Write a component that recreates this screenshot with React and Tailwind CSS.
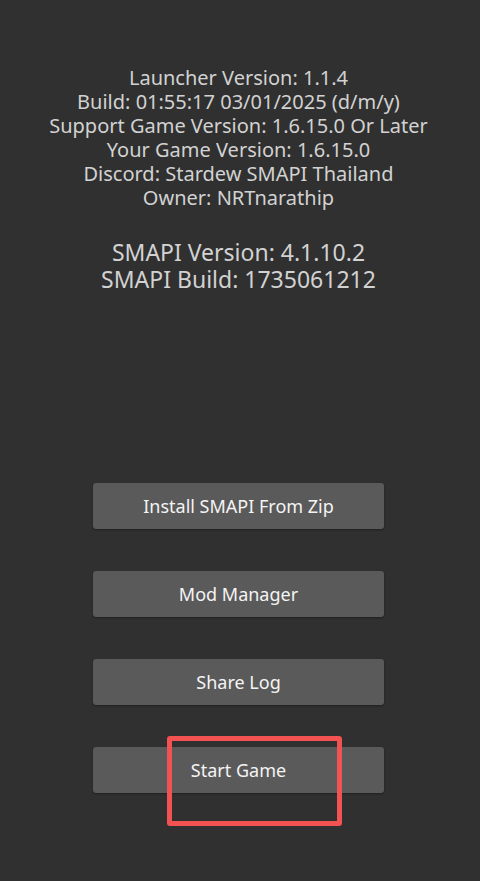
import React from 'react';

const infoLines = [
  'Launcher Version: 1.1.4',
  'Build: 01:55:17 03/01/2025 (d/m/y)',
  'Support Game Version: 1.6.15.0 Or Later',
  'Your Game Version: 1.6.15.0',
  'Discord: Stardew SMAPI Thailand',
  'Owner: NRTnarathip',
];

const smapiLines = ['SMAPI Version: 4.1.10.2', 'SMAPI Build: 1735061212'];

const buttons = ['Install SMAPI From Zip', 'Mod Manager', 'Share Log', 'Start Game'];

export default function App() {
  return (
    <div
      className="relative w-full h-[881px] bg-[#303030] flex flex-col items-center pr-[3px]"
      style={{ fontFamily: '"Noto Sans", Roboto, sans-serif' }}
    >
      {/* info */}
      <div className="pt-[66px] flex flex-col items-center text-[#d2d2d2] text-[20px] leading-[24px]">
        {infoLines.map((l) => (
          <div key={l}>{l}</div>
        ))}
      </div>

      <div className="mt-[29px] flex flex-col items-center text-[#d2d2d2] text-[23px] leading-[27px]">
        {smapiLines.map((l) => (
          <div key={l}>{l}</div>
        ))}
      </div>

      {/* botones */}
      <div className="mt-[190px] flex flex-col gap-[42px] w-[291px]">
        {buttons.map((b) => (
          <button
            key={b}
            className="h-[46px] w-full rounded-[3px] bg-[#5a5a5a] text-[#f4f4f4] text-[18px] font-normal shadow-[0_1px_2px_rgba(0,0,0,0.35)]"
          >
            {b}
          </button>
        ))}
      </div>

      {/* marca roja */}
      <div className="absolute left-[167px] top-[736px] w-[175px] h-[90px] border-[5px] border-[#f25252] rounded-[3px]" />
    </div>
  );
}
